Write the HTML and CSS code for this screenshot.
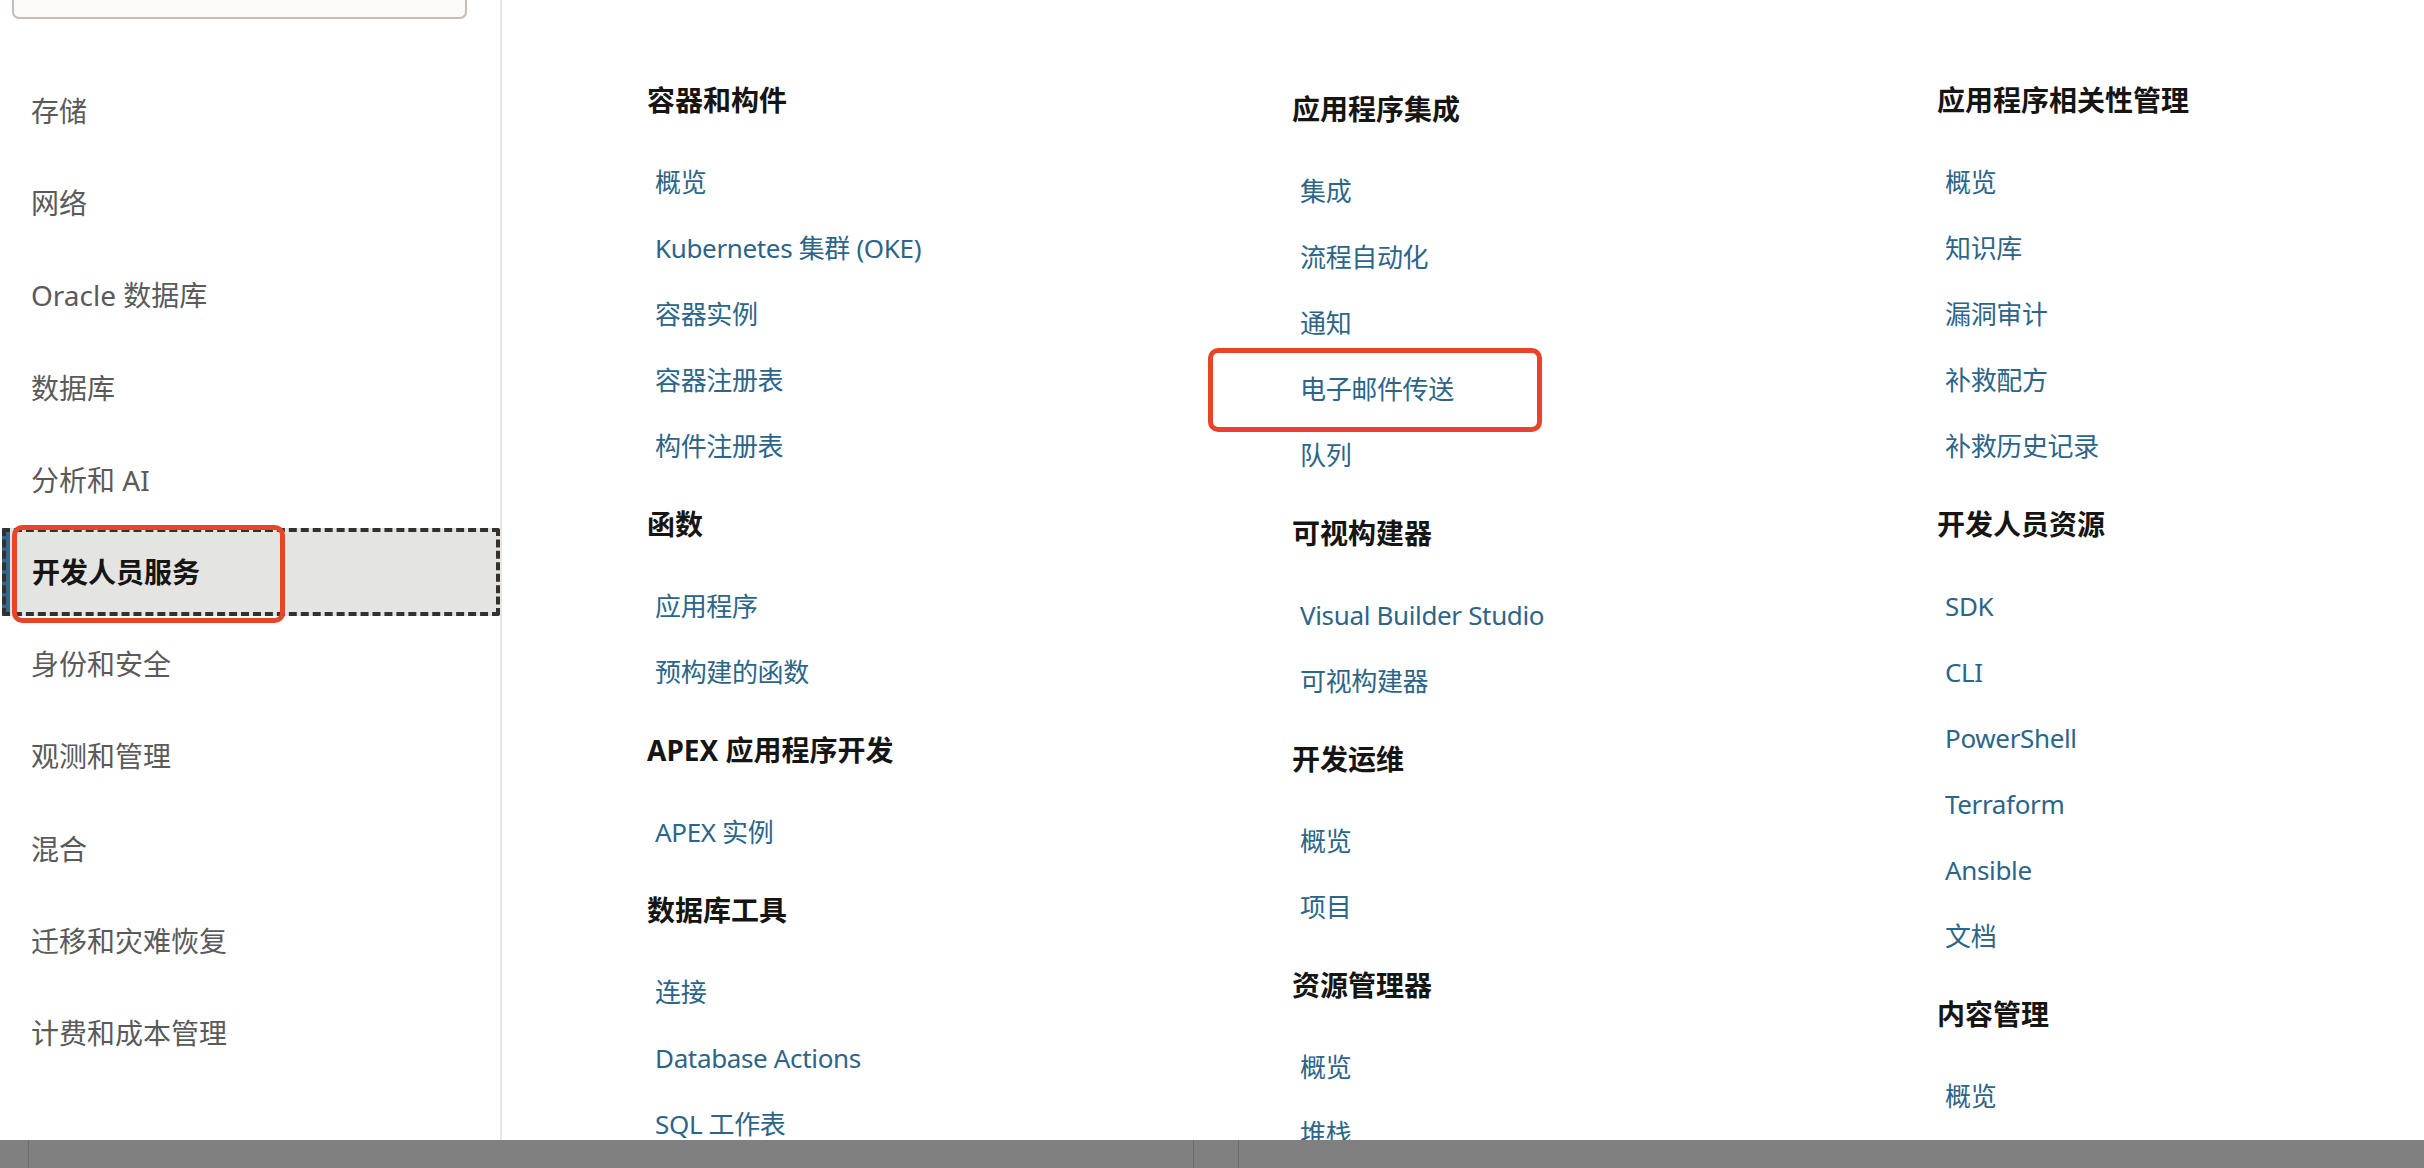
FILE: index.html
```html
<!DOCTYPE html>
<html lang="zh-CN">
<head>
<meta charset="utf-8">
<title>开发人员服务</title>
<link rel="stylesheet" href="styles.css">
</head>
<body>
<div class="page">
  <aside class="sidebar">
    <div class="search"></div>
    <nav class="nav">
      <div class="nav-item">存储</div>
      <div class="nav-item">网络</div>
      <div class="nav-item">Oracle 数据库</div>
      <div class="nav-item">数据库</div>
      <div class="nav-item">分析和 AI</div>
      <div class="nav-item selected">开发人员服务<span class="mark mark-nav"></span></div>
      <div class="nav-item">身份和安全</div>
      <div class="nav-item">观测和管理</div>
      <div class="nav-item">混合</div>
      <div class="nav-item">迁移和灾难恢复</div>
      <div class="nav-item">计费和成本管理</div>
    </nav>
  </aside>
  <main class="content">
    <div class="col">
      <section class="group">
        <h3 class="group-title">容器和构件</h3>
        <a class="link">概览</a>
        <a class="link">Kubernetes 集群 (OKE)</a>
        <a class="link">容器实例</a>
        <a class="link">容器注册表</a>
        <a class="link">构件注册表</a>
      </section>
      <section class="group">
        <h3 class="group-title">函数</h3>
        <a class="link">应用程序</a>
        <a class="link">预构建的函数</a>
      </section>
      <section class="group">
        <h3 class="group-title">APEX 应用程序开发</h3>
        <a class="link">APEX 实例</a>
      </section>
      <section class="group">
        <h3 class="group-title">数据库工具</h3>
        <a class="link">连接</a>
        <a class="link">Database Actions</a>
        <a class="link">SQL 工作表</a>
      </section>
    </div>
    <div class="col col-shift">
      <section class="group">
        <h3 class="group-title">应用程序集成</h3>
        <a class="link">集成</a>
        <a class="link">流程自动化</a>
        <a class="link">通知</a>
        <a class="link">电子邮件传送<span class="mark mark-link"></span></a>
        <a class="link">队列</a>
      </section>
      <section class="group">
        <h3 class="group-title">可视构建器</h3>
        <a class="link">Visual Builder Studio</a>
        <a class="link">可视构建器</a>
      </section>
      <section class="group">
        <h3 class="group-title">开发运维</h3>
        <a class="link">概览</a>
        <a class="link">项目</a>
      </section>
      <section class="group">
        <h3 class="group-title">资源管理器</h3>
        <a class="link">概览</a>
        <a class="link">堆栈</a>
      </section>
    </div>
    <div class="col">
      <section class="group">
        <h3 class="group-title">应用程序相关性管理</h3>
        <a class="link">概览</a>
        <a class="link">知识库</a>
        <a class="link">漏洞审计</a>
        <a class="link">补救配方</a>
        <a class="link">补救历史记录</a>
      </section>
      <section class="group">
        <h3 class="group-title">开发人员资源</h3>
        <a class="link">SDK</a>
        <a class="link">CLI</a>
        <a class="link">PowerShell</a>
        <a class="link">Terraform</a>
        <a class="link">Ansible</a>
        <a class="link">文档</a>
      </section>
      <section class="group">
        <h3 class="group-title">内容管理</h3>
        <a class="link">概览</a>
      </section>
    </div>
  </main>
</div>
<div class="bottom-bar">
  <div class="seg seg-a"></div>
  <div class="seg seg-b"></div>
  <div class="seg seg-c"></div>
  <div class="seg seg-d"></div>
</div>
</body>
</html>
```
FILE: styles.css
```css
* { box-sizing: border-box; }
html, body {
  margin: 0;
  padding: 0;
  height: 100%;
  overflow: hidden;
  background: #ffffff;
  font-family: "Noto Sans", "Noto Sans CJK SC", sans-serif;
}
.page {
  display: flex;
  height: 1168px;
}
.sidebar {
  width: 502px;
  flex: none;
  border-right: 2px solid #e6e6e6;
  padding-left: 2px;
}
.search {
  margin-left: 10px;
  width: 455px;
  height: 19px;
  background: #fbfaf9;
  border: 2px solid #c2beb9;
  border-top: none;
  border-radius: 0 0 7px 7px;
}
.nav {
  display: flex;
  flex-direction: column;
  gap: 4.2px;
  margin-top: 48px;
}
.nav-item {
  position: relative;
  height: 88px;
  display: flex;
  align-items: center;
  padding-left: 29px;
  font-size: 28px;
  line-height: 40px;
  color: #5a5a5a;
}
.nav-item.selected {
  background: #e4e4e2;
  box-shadow: inset 8px 0 0 #2d6a8f;
  color: #161513;
  font-weight: 700;
  padding-left: 30px;
}
.nav-item.selected::after {
  content: "";
  position: absolute;
  inset: 0;
  border: 4px dashed #33302d;
  border-radius: 3px;
  pointer-events: none;
}
.mark {
  position: absolute;
  border: 5px solid #e8442b;
  border-radius: 10px;
  pointer-events: none;
  z-index: 1;
}
.mark-nav {
  left: 10px;
  top: -3px;
  width: 273px;
  height: 98px;
}
.content {
  flex: 1;
  display: grid;
  grid-template-columns: 645px 645px 645px;
  align-items: start;
  padding: 80px 0 0 145px;
}
.col-shift {
  padding-top: 9px;
}
.group {
  display: flex;
  flex-direction: column;
  margin-bottom: 25px;
}
.group-title {
  margin: 0 0 29px 0;
  font-size: 28px;
  line-height: 40px;
  font-weight: 700;
  color: #161513;
}
.link {
  position: relative;
  display: block;
  height: 66px;
  line-height: 66px;
  padding-left: 8px;
  font-size: 26px;
  letter-spacing: -0.35px;
  color: #2c6589;
  text-decoration: none;
  white-space: nowrap;
}
.mark-link {
  left: -84px;
  top: -8px;
  width: 334px;
  height: 84px;
}
.bottom-bar {
  position: fixed;
  left: 0;
  right: 0;
  bottom: 0;
  height: 28px;
  background: #808080;
  display: flex;
}
.seg { height: 100%; }
.seg-a { width: 29px; border-right: 1px solid #6c6c6c; }
.seg-b { width: 1165px; border-right: 1px solid #6c6c6c; }
.seg-c { width: 45px; border-right: 1px solid #6c6c6c; }
.seg-d { flex: 1; }
```
